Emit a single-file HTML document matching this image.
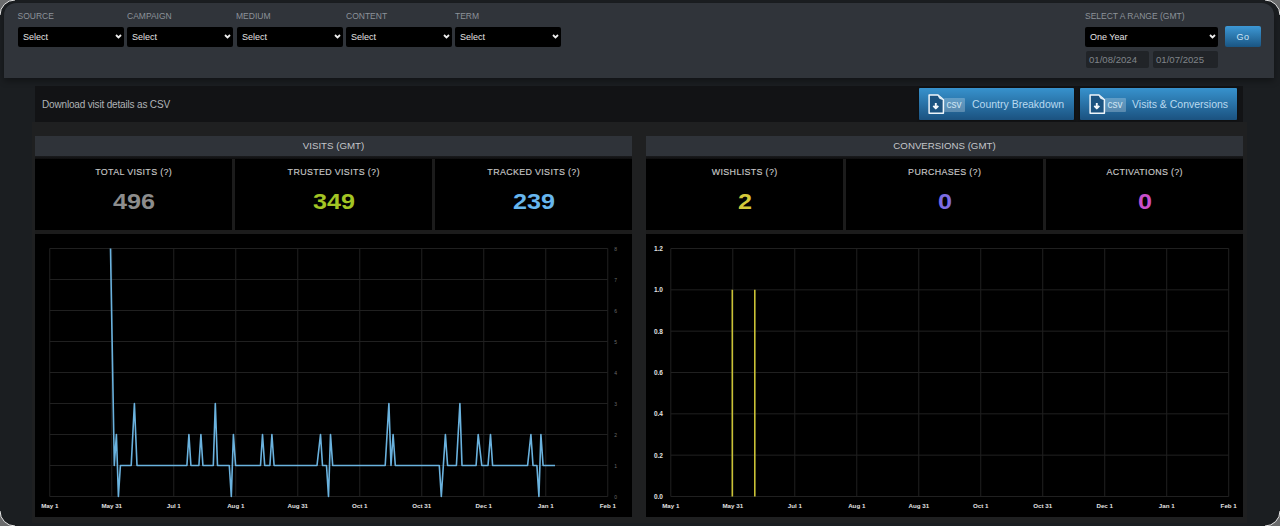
<!DOCTYPE html>
<html><head><meta charset="utf-8">
<style>
*{box-sizing:border-box;margin:0;padding:0}
html,body{width:1280px;height:526px;overflow:hidden;background:#646567}
body{font-family:"Liberation Sans",sans-serif;position:relative}
#frame{position:absolute;left:0;top:0;width:1280px;height:526px;background:#1b1e21;overflow:hidden}
#ring{position:absolute;left:0;top:0}
.abs{position:absolute}
.t{position:absolute;white-space:nowrap;line-height:1}
#filters{left:4px;top:3px;width:1270px;height:75px;background:#30343a;border-radius:12px 12px 0 0;box-shadow:0 3px 6px rgba(0,0,0,.35)}
.lbl{font-size:8.5px;color:#8c9299;letter-spacing:0}
.sel{position:absolute;height:20px;background:#000;border-radius:2px}
.sel span{position:absolute;left:5px;top:6px;font-size:9px;line-height:9px;color:#e4e4e4;white-space:nowrap}
.chev{position:absolute;width:7px;height:5px;top:7px}
.date{position:absolute;height:17px;background:#212428;border-radius:2px}
.date span{position:absolute;left:3px;top:4px;font-size:9.6px;line-height:9px;color:#80848a;white-space:nowrap}
.gobtn{position:absolute;left:1225px;top:26px;width:36px;height:21px;border-radius:2px;background:linear-gradient(#3d98d5,#1a5582)}
.gobtn span{position:absolute;left:0;right:0;top:6.5px;text-align:center;font-size:9px;line-height:9px;letter-spacing:.5px;color:#cde6f7}
#csvbar{left:35px;top:86px;width:1208px;height:36px;background:#121315}
.btn{position:absolute;top:88px;height:32px;border-radius:1px;box-shadow:0 0 2px rgba(0,0,0,.6);background:linear-gradient(#3792cd,#1b5280)}
.btn .txt{position:absolute;top:11px;font-size:10.5px;line-height:10px;color:#b9daf0;white-space:nowrap}
.badge{position:absolute;top:9.5px;width:21px;height:14.5px;background:rgba(255,255,255,.25);border-radius:1px}
.badge span{position:absolute;left:2.5px;top:2.5px;font-size:10px;line-height:10px;color:#cfe4f2}
.hdr{position:absolute;top:135.5px;width:597px;height:20.5px;background:#2f3339}
.hdr span{position:absolute;left:0;right:0;top:5px;text-align:center;font-size:9.7px;line-height:10px;color:#c4c6ca}
.sec{position:absolute;top:156px;width:597px;height:361px;background:linear-gradient(#1a1b1d,#0d0d0e 3px,#1c1c1c 3px)}
.box{position:absolute;top:159px;height:71px;background:#000}
.box .tt{position:absolute;left:0;right:0;top:168px;text-align:center;font-size:8.9px;font-weight:normal;line-height:9px;color:#c8c8c8;letter-spacing:.35px;text-indent:.35px;-webkit-text-stroke:.15px #c8c8c8}
.num{position:absolute;left:0;right:0;text-align:center;font-size:21.5px;font-weight:bold;line-height:21px}
.num span{display:inline-block;transform:scaleX(1.17)}
.chart{position:absolute;top:234px;width:597px;height:283px;background:#000}
.xl{font-size:6.2px;font-weight:bold;fill:#e0e0e0}
.yl{font-size:6.5px;font-weight:bold;fill:#e0e0e0}
.yl2{font-size:5px;fill:#6a6a6a}
</style></head><body>
<div id="frame">
  <div id="filters" class="abs"></div>
  <div class="t lbl" style="left:17.5px;top:12px">SOURCE</div>
  <div class="t lbl" style="left:127px;top:12px">CAMPAIGN</div>
  <div class="t lbl" style="left:236px;top:12px">MEDIUM</div>
  <div class="t lbl" style="left:346px;top:12px">CONTENT</div>
  <div class="t lbl" style="left:455px;top:12px">TERM</div>
  <div class="sel" style="left:18px;top:27px;width:106px"><span>Select</span><svg class="chev" style="left:97px" viewBox="0 0 7 5"><path d="M1 1 L3.5 3.5 L6 1" fill="none" stroke="#eee" stroke-width="1.8"/></svg></div>
  <div class="sel" style="left:127px;top:27px;width:106px"><span>Select</span><svg class="chev" style="left:97px" viewBox="0 0 7 5"><path d="M1 1 L3.5 3.5 L6 1" fill="none" stroke="#eee" stroke-width="1.8"/></svg></div>
  <div class="sel" style="left:237px;top:27px;width:106px"><span>Select</span><svg class="chev" style="left:97px" viewBox="0 0 7 5"><path d="M1 1 L3.5 3.5 L6 1" fill="none" stroke="#eee" stroke-width="1.8"/></svg></div>
  <div class="sel" style="left:346px;top:27px;width:106px"><span>Select</span><svg class="chev" style="left:97px" viewBox="0 0 7 5"><path d="M1 1 L3.5 3.5 L6 1" fill="none" stroke="#eee" stroke-width="1.8"/></svg></div>
  <div class="sel" style="left:455px;top:27px;width:106px"><span>Select</span><svg class="chev" style="left:97px" viewBox="0 0 7 5"><path d="M1 1 L3.5 3.5 L6 1" fill="none" stroke="#eee" stroke-width="1.8"/></svg></div>

  <div class="t lbl" style="left:1085px;top:12px">SELECT A RANGE (GMT)</div>
  <div class="sel" style="left:1085px;top:27px;width:133px"><span>One Year</span><svg class="chev" style="left:124px" viewBox="0 0 7 5"><path d="M1 1 L3.5 3.5 L6 1" fill="none" stroke="#eee" stroke-width="1.8"/></svg></div>
  <div class="date" style="left:1086px;top:51px;width:63px"><span>01/08/2024</span></div>
  <div class="date" style="left:1153px;top:51px;width:65px"><span>01/07/2025</span></div>
  <div class="gobtn"><span>Go</span></div>

  <div class="abs" style="left:32px;top:122px;width:1215px;height:401px;background:#1f2021"></div>
  <div id="csvbar" class="abs"></div>
  <div class="t" style="left:42px;top:99.5px;font-size:10px;letter-spacing:-.17px;color:#b0b3b7">Download visit details as CSV</div>
  <div class="btn" style="left:919px;width:155px">
    <svg class="abs" style="left:9px;top:6px" width="17" height="21" viewBox="0 0 17 21"><path d="M1.1 1.1 H10 L15.4 5.6 V19.2 H1.1 Z" fill="#1c5380" stroke="#eef5fa" stroke-width="1.5" stroke-linejoin="round"/><path d="M10 1.1 L15.4 5.6 Q10.3 6.2 10 1.1 Z" fill="#dce9f3"/><path d="M7.8 9 V14 M5.3 11.8 L7.8 14.4 L10.3 11.8" fill="none" stroke="#f4f8fb" stroke-width="1.9" stroke-linejoin="round"/></svg>
    <div class="badge" style="left:25px"><span>csv</span></div>
    <div class="txt" style="left:53px">Country Breakdown</div>
  </div>
  <div class="btn" style="left:1080px;width:157px">
    <svg class="abs" style="left:9px;top:6px" width="17" height="21" viewBox="0 0 17 21"><path d="M1.1 1.1 H10 L15.4 5.6 V19.2 H1.1 Z" fill="#1c5380" stroke="#eef5fa" stroke-width="1.5" stroke-linejoin="round"/><path d="M10 1.1 L15.4 5.6 Q10.3 6.2 10 1.1 Z" fill="#dce9f3"/><path d="M7.8 9 V14 M5.3 11.8 L7.8 14.4 L10.3 11.8" fill="none" stroke="#f4f8fb" stroke-width="1.9" stroke-linejoin="round"/></svg>
    <div class="badge" style="left:25px"><span>csv</span></div>
    <div class="txt" style="left:52px">Visits &amp; Conversions</div>
  </div>

  <!-- Visits section -->
  <div class="hdr" style="left:35px"><span>VISITS (GMT)</span></div>
  <div class="hdr" style="left:646px"><span>CONVERSIONS (GMT)</span></div>

  <div class="sec" style="left:35px"></div>
  <div class="sec" style="left:646px"></div>
  <div class="box" style="left:35px;width:197px"><div class="tt" style="top:9px">TOTAL VISITS (?)</div><div class="num" style="top:32.5px;color:#8c8c8c"><span>496</span></div></div>
  <div class="box" style="left:235px;width:197px"><div class="tt" style="top:9px">TRUSTED VISITS (?)</div><div class="num" style="top:32.5px;color:#a3c524"><span>349</span></div></div>
  <div class="box" style="left:435px;width:197px"><div class="tt" style="top:9px">TRACKED VISITS (?)</div><div class="num" style="top:32.5px;color:#67b6ee"><span>239</span></div></div>

  <div class="box" style="left:646px;width:197px"><div class="tt" style="top:9px">WISHLISTS (?)</div><div class="num" style="top:32.5px;color:#d3c83a"><span>2</span></div></div>
  <div class="box" style="left:846px;width:197px"><div class="tt" style="top:9px">PURCHASES (?)</div><div class="num" style="top:32.5px;color:#7d6ce2"><span>0</span></div></div>
  <div class="box" style="left:1046px;width:197px"><div class="tt" style="top:9px">ACTIVATIONS (?)</div><div class="num" style="top:32.5px;color:#c84fca"><span>0</span></div></div>

  <div class="chart" style="left:35px"></div>
  <div class="chart" style="left:646px"></div>
<!--CHARTS--><svg id="charts" class="abs" style="left:0;top:0" width="1280" height="526" viewBox="0 0 1280 526">
<path d="M49.75 248.5V496.5M111.75 248.5V496.5M173.75 248.5V496.5M235.75 248.5V496.5M297.75 248.5V496.5M359.75 248.5V496.5M421.75 248.5V496.5M483.75 248.5V496.5M545.75 248.5V496.5M607.75 248.5V496.5M49.75 248.50H607.75M49.75 279.50H607.75M49.75 310.50H607.75M49.75 341.50H607.75M49.75 372.50H607.75M49.75 403.50H607.75M49.75 434.50H607.75M49.75 465.50H607.75M49.75 496.50H607.75M670.80 248.5V496.5M732.79 248.5V496.5M794.78 248.5V496.5M856.77 248.5V496.5M918.76 248.5V496.5M980.74 248.5V496.5M1042.73 248.5V496.5M1104.72 248.5V496.5M1166.71 248.5V496.5M1228.70 248.5V496.5M670.8 248.50H1228.7M670.8 289.83H1228.7M670.8 331.17H1228.7M670.8 372.50H1228.7M670.8 413.83H1228.7M670.8 455.17H1228.7M670.8 496.50H1228.7" stroke="#202020" stroke-width="1" fill="none"/>
<text x="49.75" y="508.4" text-anchor="middle" class="xl">May 1</text>
<text x="111.75" y="508.4" text-anchor="middle" class="xl">May 31</text>
<text x="173.75" y="508.4" text-anchor="middle" class="xl">Jul 1</text>
<text x="235.75" y="508.4" text-anchor="middle" class="xl">Aug 1</text>
<text x="297.75" y="508.4" text-anchor="middle" class="xl">Aug 31</text>
<text x="359.75" y="508.4" text-anchor="middle" class="xl">Oct 1</text>
<text x="421.75" y="508.4" text-anchor="middle" class="xl">Oct 31</text>
<text x="483.75" y="508.4" text-anchor="middle" class="xl">Dec 1</text>
<text x="545.75" y="508.4" text-anchor="middle" class="xl">Jan 1</text>
<text x="607.75" y="508.4" text-anchor="middle" class="xl">Feb 1</text>
<text x="670.80" y="508.4" text-anchor="middle" class="xl">May 1</text>
<text x="732.79" y="508.4" text-anchor="middle" class="xl">May 31</text>
<text x="794.78" y="508.4" text-anchor="middle" class="xl">Jul 1</text>
<text x="856.77" y="508.4" text-anchor="middle" class="xl">Aug 1</text>
<text x="918.76" y="508.4" text-anchor="middle" class="xl">Aug 31</text>
<text x="980.74" y="508.4" text-anchor="middle" class="xl">Oct 1</text>
<text x="1042.73" y="508.4" text-anchor="middle" class="xl">Oct 31</text>
<text x="1104.72" y="508.4" text-anchor="middle" class="xl">Dec 1</text>
<text x="1166.71" y="508.4" text-anchor="middle" class="xl">Jan 1</text>
<text x="1228.70" y="508.4" text-anchor="middle" class="xl">Feb 1</text>
<text x="615.7" y="498.50" text-anchor="middle" class="yl2">0</text>
<text x="615.7" y="467.50" text-anchor="middle" class="yl2">1</text>
<text x="615.7" y="436.50" text-anchor="middle" class="yl2">2</text>
<text x="615.7" y="405.50" text-anchor="middle" class="yl2">3</text>
<text x="615.7" y="374.50" text-anchor="middle" class="yl2">4</text>
<text x="615.7" y="343.50" text-anchor="middle" class="yl2">5</text>
<text x="615.7" y="312.50" text-anchor="middle" class="yl2">6</text>
<text x="615.7" y="281.50" text-anchor="middle" class="yl2">7</text>
<text x="615.7" y="250.50" text-anchor="middle" class="yl2">8</text>
<text x="663" y="499.00" text-anchor="end" class="yl">0.0</text>
<text x="663" y="457.67" text-anchor="end" class="yl">0.2</text>
<text x="663" y="416.33" text-anchor="end" class="yl">0.4</text>
<text x="663" y="375.00" text-anchor="end" class="yl">0.6</text>
<text x="663" y="333.67" text-anchor="end" class="yl">0.8</text>
<text x="663" y="292.33" text-anchor="end" class="yl">1.0</text>
<text x="663" y="251.00" text-anchor="end" class="yl">1.2</text>
<path d="M110.5 248.50 L114.3 465.50 L116.4 434.50 L118.4 496.50 L120.4 465.50 L131.2 465.50 L134.4 403.50 L137.0 465.50 L186.9 465.50 L188.9 434.50 L190.9 465.50 L198.9 465.50 L200.9 434.50 L202.9 465.50 L213.3 465.50 L215.3 403.50 L217.5 465.50 L229.3 465.50 L231.3 496.50 L233.4 434.50 L235.6 465.50 L260.5 465.50 L262.5 434.50 L264.7 465.50 L269.9 465.50 L271.9 434.50 L274.1 465.50 L317.0 465.50 L320.5 434.50 L322.5 465.50 L326.5 465.50 L328.5 496.50 L330.5 434.50 L332.7 465.50 L385.2 465.50 L388.9 403.50 L391.0 465.50 L393.1 434.50 L395.3 465.50 L439.3 465.50 L441.3 496.50 L445.4 434.50 L447.6 465.50 L456.4 465.50 L459.9 403.50 L462.0 465.50 L476.1 465.50 L478.2 434.50 L481.8 465.50 L488.0 465.50 L490.5 434.50 L492.6 465.50 L527.6 465.50 L530.9 434.50 L533.0 465.50 L536.9 465.50 L538.9 496.50 L540.9 434.50 L543.1 465.50 L555.0 465.50" stroke="#6ab2de" stroke-width="1.6" fill="none" stroke-linejoin="round"/>
<path d="M732.3 496.5V289.83M754.8 496.5V289.83" stroke="#c9c136" stroke-width="1.6" fill="none"/>
</svg>
<!--/CHARTS-->
</div>
<svg id="ring" width="1280" height="526" viewBox="0 0 1280 526"><path d="M0 0H15A15 15 0 0 0 0 15ZM1280 0H1265A15 15 0 0 1 1280 15ZM0 526H15A15 15 0 0 1 0 511ZM1280 526H1265A15 15 0 0 0 1280 511Z" fill="#6a6b6c"/><path d="M0 15A15 15 0 0 1 15 0M1265 0A15 15 0 0 1 1280 15M0 511A15 15 0 0 0 15 526M1265 526A15 15 0 0 0 1280 511" fill="none" stroke="#e8e8e8" stroke-width="1"/></svg>
</body></html>
